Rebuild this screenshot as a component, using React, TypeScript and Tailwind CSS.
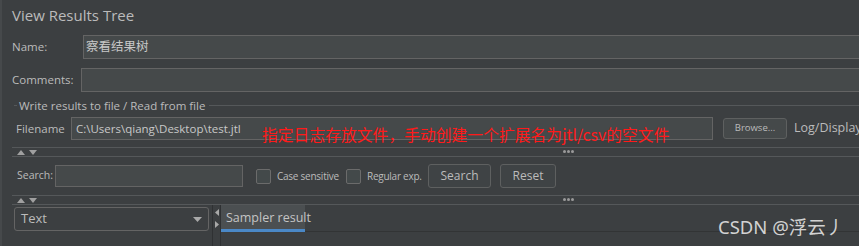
const sans = "font-['Open_Sans','Noto_Sans_CJK_SC',sans-serif]";

function Arrows() {
  return (
    <div className="flex items-center gap-[4px] pl-[5px]">
      <svg width="8" height="5" viewBox="0 0 8 5"><path d="M0 5 L4 0 L8 5 Z" fill="#a0a0a0" /></svg>
      <svg width="8" height="5" viewBox="0 0 8 5"><path d="M0 0 L8 0 L4 5 Z" fill="#a0a0a0" /></svg>
    </div>
  );
}

function Dots() {
  return (
    <div className="flex gap-[1px]">
      <span className="w-[3px] h-[3px] rounded-full bg-[#9a9a9a]" />
      <span className="w-[3px] h-[3px] rounded-full bg-[#9a9a9a]" />
      <span className="w-[3px] h-[3px] rounded-full bg-[#9a9a9a]" />
    </div>
  );
}

function Splitter() {
  return (
    <div className="ml-3 h-[10px] border-y border-[#55585a] flex items-center relative">
      <Arrows />
      <div className="absolute left-[551px] top-[2px]">
        <Dots />
      </div>
    </div>
  );
}

function Checkbox({ label, width }: { label: string; width: string }) {
  return (
    <div className="flex items-center shrink-0">
      <span className="shrink-0 w-[15px] h-[15px] rounded-[2px] border border-[#6b6b6b] bg-[#43494a]" />
      <span className={`ml-[6px] shrink-0 whitespace-nowrap text-[10px] tracking-[-0.25px] text-[#bbbbbb] ${width}`}>{label}</span>
    </div>
  );
}

export default function App() {
  return (
    <div className={`relative w-[859px] h-[246px] overflow-hidden bg-[#3c3f41] text-[#bbbbbb] whitespace-nowrap ${sans}`}>
      <div className="absolute left-0 top-0 bottom-0 w-[2px] bg-[#46494b]" />

      {/* title */}
      <div className="h-[35px] pl-3 pt-[4px] text-[15px] leading-[22px] text-[#bbbbbb]">View Results Tree</div>

      {/* name */}
      <div className="flex h-[24px] items-center">
        <span className="shrink-0 w-[83px] pl-3 text-[11.5px]">Name:</span>
        <div className="flex-1 -mr-4 h-[24px] border border-[#646464] bg-[#45494a] flex items-center pl-[2px] text-[12.5px] text-[#c8c8c8]">
          察看结果树
        </div>
      </div>

      {/* comments */}
      <div className="mt-[9px] flex h-[24px] items-center">
        <span className="shrink-0 w-[81px] pl-3 text-[11.5px]">Comments:</span>
        <div className="flex-1 -mr-4 h-[24px] border border-[#646464] bg-[#45494a]" />
      </div>

      {/* group header */}
      <div className="mt-[6px] h-[15px] flex items-center">
        <span className="shrink-0 ml-[14px] w-[3px] h-px bg-[#55585a]" />
        <span className="shrink-0 ml-[2px] text-[11.5px] leading-[15px]">Write results to file / Read from file</span>
        <span className="ml-[4px] flex-1 h-px bg-[#55585a]" />
      </div>

      {/* filename */}
      <div className="relative mt-[4px] flex h-[23px] items-center">
        <span className="shrink-0 w-[71px] pl-4 text-[11.5px]">Filename</span>
        <div className="shrink-0 w-[642px] h-[23px] border border-[#646464] bg-[#45494a] flex items-center pl-[4px] text-[11.5px] text-[#c8c8c8]">
          C:\Users\qiang\Desktop\test.jtl
        </div>
        <div className="shrink-0 ml-[10px] w-[64px] h-[21px] rounded-[3px] border border-[#5e6060] bg-[#45494a] flex items-center justify-center text-[9.5px] text-[#bbbbbb]">
          Browse...
        </div>
        <span className="shrink-0 ml-[7px] text-[12.5px]">Log/Display</span>
        <span className="absolute left-[262px] top-[9px] text-[15.8px] leading-[18px] text-[#ff1a1a] font-['Noto_Sans_CJK_SC',sans-serif]">
          指定日志存放文件，手动创建一个扩展名为jtl/csv的空文件
        </span>
      </div>

      <div className="mt-[7px]">
        <Splitter />
      </div>

      {/* search row */}
      <div className="mt-[7px] flex h-[24px] items-center">
        <span className="shrink-0 w-[55px] pl-[17px] text-[10.5px]">Search:</span>
        <div className="shrink-0 w-[188px] h-[22px] border border-[#646464] bg-[#45494a]" />
        <div className="ml-[13px] shrink-0">
          <Checkbox label="Case sensitive" width="w-[69px]" />
        </div>
        <Checkbox label="Regular exp." width="w-[60px]" />
        <div className="shrink-0 ml-[1px] w-[63px] h-[24px] rounded-[3px] border border-[#5e6060] bg-[#3f4345] flex items-center justify-center text-[12px]">
          Search
        </div>
        <div className="shrink-0 ml-[9px] w-[56px] h-[24px] rounded-[3px] border border-[#5e6060] bg-[#3f4345] flex items-center justify-center text-[12px]">
          Reset
        </div>
      </div>

      <div className="mt-[7px]">
        <Splitter />
      </div>

      {/* bottom */}
      <div className="flex h-[42px]">
        <div className="shrink-0 w-[212px] pl-[14px] pt-[2px]">
          <div className="w-[195px] h-[24px] rounded-[3px] border border-[#646464] flex items-center justify-between pl-[6px] pr-[6px] text-[13px]">
            <span>Text</span>
            <svg width="9" height="5" viewBox="0 0 9 5"><path d="M0 0 L9 0 L4.5 5 Z" fill="#a9a9a9" /></svg>
          </div>
        </div>
        <div className="shrink-0 w-[9px] border-l border-r border-[#2f3133] flex flex-col items-center pt-[5px] gap-[5px] -mt-px">
          <svg width="4" height="7" viewBox="0 0 4 7"><path d="M4 0 L0 3.5 L4 7 Z" fill="#a9a9a9" /></svg>
          <svg width="4" height="7" viewBox="0 0 4 7"><path d="M0 0 L4 3.5 L0 7 Z" fill="#a9a9a9" /></svg>
        </div>
        <div className="flex-1 -mt-px">
          <div className="flex h-[28px] border-b border-[#323435]">
            <div className="shrink-0 w-[84px] h-[28px] bg-[#4b4f51] border-b-[3px] border-[#4a88c7] flex items-center pl-[5px] pt-[4px] text-[12.5px] text-[#c4c4c4]">
              Sampler result
            </div>
          </div>
        </div>
      </div>

      <span className="absolute left-[718px] top-[215px] text-[18.5px] leading-[24px] text-[#d2d2d2] font-['Noto_Sans','Noto_Sans_CJK_SC',sans-serif]">
        CSDN @浮云丿
      </span>
    </div>
  );
}
